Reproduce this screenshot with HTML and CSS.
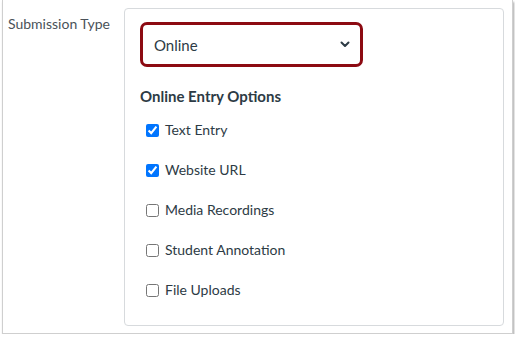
FILE: index.html
```html
<!DOCTYPE html>
<html lang="en">
<head>
    <meta charset="UTF-8">
    <title>Submission Type</title>
    <link rel="stylesheet" href="styles.css">
</head>
<body>
    <div class="frame">
        <div class="field-row">
            <div class="field-label">Submission Type</div>

            <!-- options card -->
            <div class="card">
                <div class="select-box">
                    <span class="select-value">Online</span>
                    <svg class="chevron" width="10" height="7" viewBox="0 0 10 7">
                        <path d="M1.5 1.5 L5 5 L8.5 1.5" fill="none" stroke="#2d3b45" stroke-width="2" stroke-linecap="round" stroke-linejoin="round"/>
                    </svg>
                </div>

                <h3 class="options-title">Online Entry Options</h3>

                <ul class="option-list">
                    <li><label class="option"><input type="checkbox" checked> Text Entry</label></li>
                    <li><label class="option"><input type="checkbox" checked> Website URL</label></li>
                    <li><label class="option"><input type="checkbox"> Media Recordings</label></li>
                    <li><label class="option"><input type="checkbox"> Student Annotation</label></li>
                    <li><label class="option"><input type="checkbox"> File Uploads</label></li>
                </ul>
            </div>
        </div>
    </div>
</body>
</html>
```

FILE: styles.css
```css
body {
    margin: 0;
    background: #fff;
    font-family: Lato, "Noto Sans", sans-serif;
    color: #2d3b45;
}

/* screenshot frame */
.frame {
    box-sizing: border-box;
    width: 511px;
    height: 334px;
    margin-left: 2px;
    border: 1px solid #cfcfcf;
    border-top: none;
    box-shadow: 1px 2px 2px rgba(0,0,0,0.35);
}

.field-row {
    display: flex;
    padding-top: 8px;
}

.field-label {
    width: 116px;
    padding: 7px 0 0 5px;
    font-size: 14px;
    line-height: 18px;
    color: #4a5259;
}

/* card */
.card {
    box-sizing: border-box;
    width: 380px;
    height: 318px;
    padding: 13px 15px;
    border: 1px solid #d7dadd;
    border-radius: 4px;
}

.select-box {
    box-sizing: border-box;
    display: flex;
    align-items: center;
    justify-content: space-between;
    width: 223px;
    height: 45px;
    padding: 0 10px 0 11px;
    border: 3px solid #8c0a12;
    border-radius: 7px;
}

.select-value {
    font-size: 15px;
}

.options-title {
    margin: 19px 0 0;
    font-size: 15px;
    line-height: 20px;
    font-weight: 700;
}

.option-list {
    list-style: none;
    margin: 14px 0 0;
    padding: 0 0 0 6px;
    display: flex;
    flex-direction: column;
    gap: 20px;
}

.option {
    display: flex;
    align-items: center;
    gap: 6px;
    font-size: 14px;
    line-height: 20px;
}

.option input {
    width: 13px;
    height: 13px;
    margin: 0;
}
```
